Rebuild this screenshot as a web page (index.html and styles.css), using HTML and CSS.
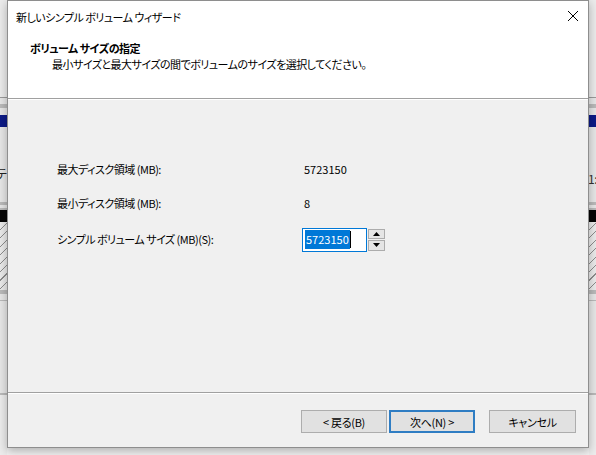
FILE: index.html
```html
<!DOCTYPE html>
<html lang="ja">
<head>
<meta charset="utf-8">
<title>新しいシンプル ボリューム ウィザード</title>
<link rel="stylesheet" href="styles.css">
</head>
<body>
<div class="desk">
  <div class="bg bg-left">
    <div class="b-top"></div>
    <div class="b-line"></div>
    <div class="b-light s6"></div>
    <div class="b-gray s4"></div>
    <div class="b-light s7"></div>
    <div class="b-navy"></div>
    <div class="b-light grow-a"><span class="frag">テ</span></div>
    <div class="b-gray s3"></div>
    <div class="b-light s3"></div>
    <div class="b-gray s2"></div>
    <div class="b-black"></div>
    <div class="b-hatch"></div>
    <div class="b-gray s4"></div>
    <div class="b-light s6"></div>
    <div class="b-gray s1"></div>
    <div class="b-light grow-b"></div>
    <div class="b-gray s2"></div>
    <div class="b-light grow-c"></div>
  </div>

  <div class="dialog">
    <div class="titlebar">
      <span class="title">新しいシンプル ボリューム ウィザード</span>
      <svg class="close" width="12" height="12" viewBox="0 0 12 12" aria-hidden="true">
        <path d="M1 1 L11 11 M11 1 L1 11" stroke="#000" stroke-width="1" fill="none"/>
      </svg>
    </div>
    <div class="header">
      <div class="h-title">ボリューム サイズの指定</div>
      <div class="h-sub">最小サイズと最大サイズの間でボリュームのサイズを選択してください。</div>
    </div>
    <div class="sep"></div>
    <div class="content">
      <div class="form">
        <div class="label">最大ディスク領域 (MB):</div>
        <div class="value">5723150</div>
        <div class="label">最小ディスク領域 (MB):</div>
        <div class="value">8</div>
        <div class="label">シンプル ボリューム サイズ (MB)(S):</div>
        <div class="spin">
          <div class="edit"><span class="sel">5723150</span><span class="caret"></span></div>
          <div class="arrows">
            <div class="arrow">
              <svg width="7" height="4" viewBox="0 0 7 4"><path d="M3.5 0 L7 4 L0 4 Z" fill="#000"/></svg>
            </div>
            <div class="arrow">
              <svg width="7" height="4" viewBox="0 0 7 4"><path d="M0 0 L7 0 L3.5 4 Z" fill="#000"/></svg>
            </div>
          </div>
        </div>
      </div>
    </div>
    <div class="sep"></div>
    <div class="footer">
      <button class="btn">&lt; 戻る(B)</button>
      <button class="btn btn-default">次へ(N) &gt;</button>
      <button class="btn btn-cancel">キャンセル</button>
    </div>
  </div>

  <div class="bg bg-right">
    <div class="b-top"></div>
    <div class="b-line"></div>
    <div class="b-light s6"></div>
    <div class="b-gray s4"></div>
    <div class="b-light s7"></div>
    <div class="b-navy"></div>
    <div class="b-light grow-a"><span class="frag frag-r">1:</span></div>
    <div class="b-gray s3"></div>
    <div class="b-light s3"></div>
    <div class="b-gray s2"></div>
    <div class="b-black"></div>
    <div class="b-hatch"></div>
    <div class="b-gray s4"></div>
    <div class="b-light s6"></div>
    <div class="b-gray s1"></div>
    <div class="b-light grow-b"></div>
    <div class="b-gray s2"></div>
    <div class="b-light grow-c"></div>
  </div>
</div>
</body>
</html>
```

FILE: styles.css
```css
* { box-sizing: border-box; }
html, body { margin: 0; padding: 0; }
body {
  width: 596px;
  height: 455px;
  overflow: hidden;
  background: #f2f2f2;
  font-family: "Noto Sans CJK JP", "Noto Sans", sans-serif;
  font-size: 11px;
  letter-spacing: -0.5px;
  color: #000;
  font-feature-settings: "palt";
}
.desk {
  display: flex;
  align-items: flex-start;
  height: 455px;
}

/* background window fragments */
.bg {
  width: 7px;
  height: 455px;
  display: flex;
  flex-direction: column;
  overflow: hidden;
  background: #ececec;
}
.b-top { height: 97px; background: #ebebeb; }
.b-line { height: 1px; background: #9a9a9a; }
.b-light { background: #e6e6e6; }
.b-gray { background: #b9b9b9; }
.s1 { height: 1px; }
.s2 { height: 2px; }
.s3 { height: 3px; }
.s4 { height: 4px; }
.s6 { height: 6px; }
.s7 { height: 7px; }
.b-navy { height: 12px; background: #0c1a86; }
.grow-a { height: 75px; overflow: hidden; }
.grow-b { height: 92px; }
.grow-c { flex: 1; background: #ececec; }
.b-black { height: 12px; background: #050505; }
.b-hatch {
  height: 68px;
  background: repeating-linear-gradient(135deg, #eaeaea 0 5px, #8c8c8c 5px 6px);
}
.frag {
  display: block;
  margin-top: 40px;
  margin-left: -4px;
  font-size: 12px;
  line-height: 14px;
  color: #222;
}
.frag-r { margin-top: 45px; margin-left: -1px; color: #333; }

/* dialog */
.dialog {
  position: relative;
  z-index: 1;
  width: 582px;
  height: 448px;
  flex: none;
  border: 1px solid #8e8e8e;
  background: #f0f0f0;
  display: flex;
  flex-direction: column;
  box-shadow: 0 3px 9px rgba(0, 0, 0, 0.28);
}
.titlebar {
  height: 30px;
  background: #fff;
  display: flex;
  align-items: center;
  justify-content: space-between;
  padding: 0 9px 0 8px;
}
.title { line-height: 16px; padding-top: 1px; }
.close { display: block; }
.header {
  height: 67px;
  background: #fff;
  padding: 9px 0 0 22px;
}
.h-title { font-weight: bold; line-height: 16px; }
.h-sub { line-height: 16px; padding-left: 22px; }
.sep {
  height: 2px;
  border-top: 1px solid #a0a0a0;
  border-bottom: 1px solid #fff;
}
.content {
  height: 292px;
  padding: 59px 0 0 49px;
}
.form {
  display: grid;
  grid-template-columns: 245px auto;
  grid-template-rows: 20px 20px 24px;
  row-gap: 14px;
  align-items: center;
}
.label { line-height: 16px; }
.value { line-height: 16px; padding-left: 2px; letter-spacing: 0; }
.spin {
  display: flex;
  align-items: stretch;
  height: 24px;
  margin-top: 1px;
}
.edit {
  width: 65px;
  background: #fff;
  border: 1px solid #0078d7;
  display: flex;
  align-items: center;
  padding-left: 2px;
}
.sel {
  background: #0078d7;
  color: #fff;
  line-height: 19px;
  padding: 0 1px;
  letter-spacing: 0;
}
.caret { width: 1px; height: 17px; background: #000; }
.arrows {
  width: 17px;
  margin-left: 1px;
  display: flex;
  flex-direction: column;
  gap: 1px;
  padding: 1px 0;
}
.arrow {
  flex: 1;
  background: #e5e5e5;
  border: 1px solid #acacac;
  display: flex;
  align-items: center;
  justify-content: center;
}
.arrow svg { display: block; }
.footer {
  flex: 1;
  display: flex;
  justify-content: flex-end;
  align-items: flex-start;
  padding: 16px 12px 0 0;
  background: #f0f0f0;
}
.btn {
  width: 86px;
  height: 23px;
  margin-left: 2px;
  font: inherit;
  letter-spacing: -0.3px;
  color: #000;
  background: #e1e1e1;
  border: 1px solid #adadad;
  padding: 0;
  line-height: 16px;
}
.btn-default { border: 2px solid #2f7dc3; }
.btn-cancel { width: 87px; margin-left: 14px; }
```
